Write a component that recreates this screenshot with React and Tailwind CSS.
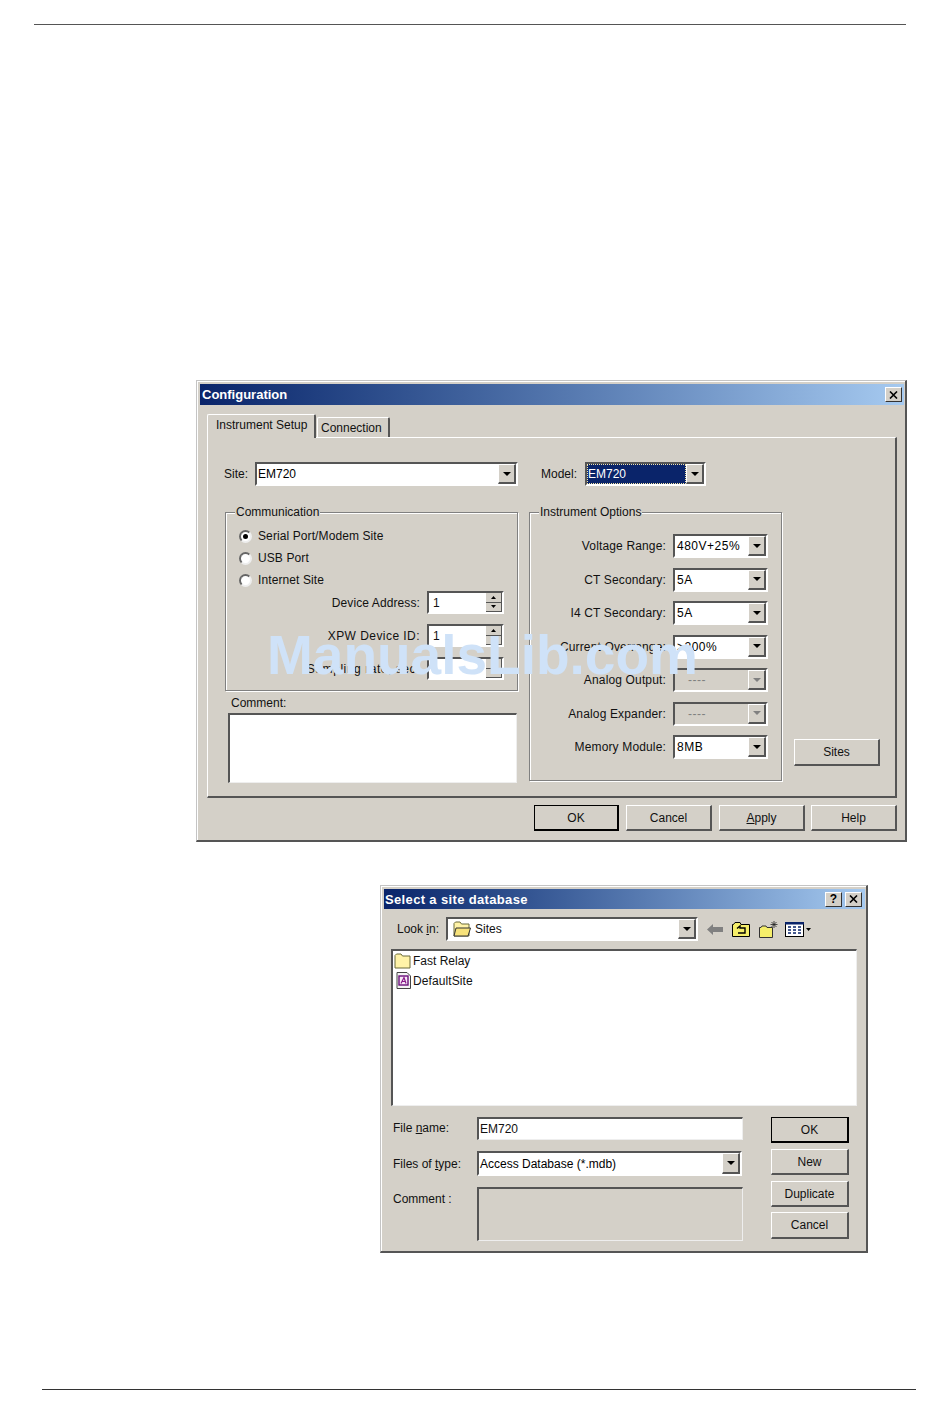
import React from 'react';

// Combo box arrow button
function ArrowButton({ disabled }) {
  return (
    <div className="w-[18px] h-full bg-[#d4d0c8] border-t border-l border-t-white border-l-white border-r-2 border-b-2 border-r-[#555555] border-b-[#555555] flex items-center justify-center">
      <svg width="8" height="4" viewBox="0 0 8 4">
        <path d="M0 0h8L4 4z" fill={disabled ? '#808080' : '#000000'} />
      </svg>
    </div>
  );
}

function Combo({ value, width, height = 24, disabled, selected }) {
  return (
    <div
      className={`flex border-t-2 border-l-2 border-t-[#555555] border-l-[#555555] border-r-2 border-b-2 border-r-white border-b-white shrink-0 ${disabled ? 'bg-[#d4d0c8]' : 'bg-white'}`}
      style={{ width, height }}
    >
      {selected ? (
        <div className="flex-1 bg-[#0a246a] text-white border border-dotted border-[#f5e6a8] flex items-center">{value}</div>
      ) : disabled ? (
        <div className="flex-1 flex items-center pl-[12px] text-[#808080]">{value}</div>
      ) : (
        <div className="flex-1 flex items-center pl-px text-black">{value}</div>
      )}
      <ArrowButton disabled={disabled} />
    </div>
  );
}

function Spinner({ value, up }) {
  return (
    <div className="w-[77px] h-[23px] flex bg-white border-t-2 border-l-2 border-t-[#555555] border-l-[#555555] border-r-2 border-b-2 border-r-white border-b-white shrink-0">
      <div className="flex-1 flex items-center pl-[4px]">{value}</div>
      <div className="w-[16px] flex flex-col">
        <div className="flex-1 bg-[#d4d0c8] border-r border-b border-r-[#555555] border-b-[#555555] flex items-center justify-center">
          {up && (
            <svg width="5" height="3" viewBox="0 0 5 3"><path d="M2.5 0L5 3H0z" fill="#000" /></svg>
          )}
        </div>
        <div className="flex-1 bg-[#d4d0c8] border-r border-b border-r-[#555555] border-b-[#555555] flex items-center justify-center">
          {up && (
            <svg width="5" height="3" viewBox="0 0 5 3"><path d="M0 0h5L2.5 3z" fill="#000" /></svg>
          )}
        </div>
      </div>
    </div>
  );
}

function Radio({ checked, label }) {
  return (
    <div className="flex items-center h-[22px]">
      <div className="w-[13px] h-[13px] rounded-full bg-white border-2 border-t-[#666666] border-l-[#666666] border-r-[#eeeeee] border-b-[#eeeeee] flex items-center justify-center">
        {checked && <div className="w-[5px] h-[5px] rounded-full bg-black" />}
      </div>
      <span className="ml-[6px] tracking-[0.1px]">{label}</span>
    </div>
  );
}

function Button({ children, width, height = 26, isDefault }) {
  return (
    <div
      className={`flex items-center justify-center bg-[#d4d0c8] shrink-0 ${isDefault ? 'border-2 border-t border-l border-black' : 'border-t border-l border-t-white border-l-white border-r-2 border-b-2 border-r-[#555555] border-b-[#555555]'}`}
      style={{ width, height }}
    >
      {children}
    </div>
  );
}

function GroupBox({ title, className, children }) {
  return (
    <div className={`relative border border-[#808080] shadow-[inset_1px_1px_0_#ffffff,1px_1px_0_#ffffff] ${className}`}>
      <span className="absolute left-[9px] top-[-8px] bg-[#d4d0c8] px-px leading-[14px]">{title}</span>
      {children}
    </div>
  );
}

function OptionRow({ label, value, disabled }) {
  return (
    <div className="flex items-center justify-end gap-[7px] h-[24px]">
      <span className="tracking-[0.15px]">{label}</span>
      <Combo value={<span className="ml-px tracking-[0.5px]">{value}</span>} width={95} disabled={disabled} />
    </div>
  );
}

function SpinnerRow({ label, value, up, labelClass }) {
  return (
    <div className="flex items-center justify-end gap-[7px]">
      <span className={labelClass}>{label}</span>
      <Spinner value={value} up={up} />
    </div>
  );
}

function TitleButton({ children }) {
  return (
    <div className="w-[17px] h-[15px] bg-[#d4d0c8] border-t border-l border-t-white border-l-white border-r border-b border-r-[#333333] border-b-[#333333] flex items-center justify-center text-black font-bold text-[12px] leading-none">
      {children}
    </div>
  );
}

function CloseIcon() {
  return (
    <svg width="9" height="8" viewBox="0 0 9 8">
      <path d="M1 0.5L8 7.5M8 0.5L1 7.5" stroke="#000" strokeWidth="1.6" fill="none" />
    </svg>
  );
}

function FolderIcon({ open }) {
  return (
    <svg width="18" height="16" viewBox="0 0 18 16">
      <path d="M1 4V2.5L2.5 1H7L8.5 3H16V15H1z" fill="#fff3a8" stroke="#6b6b3a" strokeWidth="1" />
      {open && <path d="M3 7H17.5L15 15H1z" fill="#f7e27a" stroke="#333" strokeWidth="1" />}
    </svg>
  );
}

function AccessIcon() {
  return (
    <svg width="15" height="17" viewBox="0 0 15 17">
      <path d="M1 .5H11L14.5 4V16.5H1z" fill="#f4f4f4" stroke="#444" />
      <rect x="3" y="4" width="9" height="9" fill="#f6e8f6" stroke="#6a0f7a" strokeWidth="1.4" />
      <path d="M5 11.5L8 5.5L10 11.5M6 9.5H9" stroke="#8a1a8a" strokeWidth="1.2" fill="none" />
    </svg>
  );
}

function Toolbar() {
  return (
    <div className="flex items-center h-[24px] ml-[9px]">
      <svg width="16" height="11" viewBox="0 0 16 11">
        <path d="M0 5.5L6 0V3H16V8H6V11z" fill="#808080" />
      </svg>
      <svg className="ml-[9px]" width="18" height="15" viewBox="0 0 18 15">
        <path d="M.5 14.5V2.5H1.5L3 .5H8L9 2.5H17.5V14.5z" fill="#f5ee6a" stroke="#000" />
        <path d="M5 6.5L8 4V6H13V11H6" stroke="#000" strokeWidth="1.4" fill="none" />
      </svg>
      <svg className="ml-[9px]" width="19" height="17" viewBox="0 0 19 17">
        <path d="M.5 16.5V6.5H2L3 5H7L8 6.5H13.5V16.5z" fill="#f5ee6a" stroke="#333" />
        <path d="M15 0V7M11.5 3.5H18.5M12.5 1L17.5 6M17.5 1L12.5 6" stroke="#222" strokeWidth=".8" />
      </svg>
      <svg className="ml-[7px]" width="27" height="15" viewBox="0 0 27 15">
        <rect x=".5" y=".5" width="18" height="14" fill="#fff" stroke="#000" />
        <rect x="0" y="0" width="19" height="2.5" fill="#0a246a" />
        <path d="M3 5h3M3 8h3M3 11h3M8 5h3M8 8h3M8 11h3M13 5h3M13 8h3M13 11h3" stroke="#0a246a" strokeWidth="1.5" />
        <path d="M21 6h5l-2.5 3z" fill="#000" />
      </svg>
    </div>
  );
}

export default function App() {
  return (
    <div className="relative w-[950px] h-[1420px] bg-white overflow-hidden text-[12px] leading-none text-[#111111] font-['Liberation_Sans',Arial,sans-serif]">
      <div className="h-[24px]" />
      <div className="ml-[34px] w-[872px] h-px bg-[#555555]" />

      {/* Configuration dialog */}
      <div className="mt-[355px] ml-[196px] w-[711px] h-[462px] bg-[#d4d0c8] border-t border-l border-t-[#c4c4c4] border-l-[#c4c4c4] border-r-2 border-b-2 border-r-[#555555] border-b-[#555555]">
        <div className="h-full border-t border-l border-white pt-[2px] pl-[2px] pr-px">
          <div className="h-[21px] flex items-center justify-between pl-[2px] pr-[2px] bg-gradient-to-r from-[#0a246a] to-[#a6caf0] text-white font-bold text-[13px]">
            <span>Configuration</span>
            <TitleButton><CloseIcon /></TitleButton>
          </div>

          {/* Tabs */}
          <div className="ml-[7px] mt-[9px] h-[23px] flex items-end relative z-10">
            <div className="w-[109px] h-[24px] -mb-px bg-[#d4d0c8] border-t border-l border-t-white border-l-white border-r-2 border-r-[#555555] rounded-t-[2px] flex items-center pl-[8px] pb-[4px]">Instrument Setup</div>
            <div className="ml-px w-[73px] h-[20px] border-t border-l border-t-white border-l-white border-r-2 border-r-[#555555] rounded-t-[2px] flex items-center pl-[3px]">Connection</div>
          </div>
          <div className="ml-[7px] w-[690px] h-[361px] border-t border-l border-t-white border-l-white border-r-2 border-b-2 border-r-[#555555] border-b-[#555555] pt-[24px] pl-[16px]">
            <div className="flex items-center h-[24px]">
              <span className="w-[31px]">Site:</span>
              <Combo value="EM720" width={263} />
              <span className="ml-[23px] w-[44px]">Model:</span>
              <Combo value="EM720" width={121} selected />
            </div>

            <div className="flex mt-[26px] ml-px">
              <div className="w-[293px]">
                <GroupBox title="Communication" className="h-[179px] pt-[12px] pl-[13px] pr-[13px]">
                  <Radio checked label="Serial Port/Modem Site" />
                  <Radio label="USB Port" />
                  <Radio label="Internet Site" />
                  <div className="flex flex-col gap-[10px]">
                    <SpinnerRow label="Device Address:" value="1" up labelClass="tracking-[0.1px]" />
                    <SpinnerRow label="XPW Device ID:" value="1" up labelClass="tracking-[0.45px]" />
                    <SpinnerRow label="Sampling rate, sec:" value="" labelClass="tracking-[0.55px]" />
                  </div>
                </GroupBox>
                <div className="mt-[3px] h-[18px] mb-px pl-[6px] flex items-center">Comment:</div>
                <div className="ml-[3px] w-[289px] h-[70px] bg-white border-t-2 border-l-2 border-t-[#555555] border-l-[#555555] border-r border-b border-r-[#eeeeee] border-b-[#eeeeee]" />
              </div>

              <GroupBox title="Instrument Options" className="ml-[11px] w-[253px] h-[269px] pt-[21px] pr-[13px]">
                <div className="flex flex-col gap-[9.5px]">
                  <OptionRow label="Voltage Range:" value="480V+25%" />
                  <OptionRow label="CT Secondary:" value="5A" />
                  <OptionRow label="I4 CT Secondary:" value="5A" />
                  <OptionRow label="Current Overrange:" value=">200%" />
                  <OptionRow label="Analog Output:" value="----" disabled />
                  <OptionRow label="Analog Expander:" value="----" disabled />
                  <OptionRow label="Memory Module:" value="8MB" />
                </div>
              </GroupBox>

              <div className="ml-[12px] mt-[227px]">
                <Button width={86} height={27}>Sites</Button>
              </div>
            </div>
          </div>

          <div className="ml-[7px] w-[690px] mt-[7px] flex justify-end">
            <Button width={85} isDefault>OK</Button>
            <div className="ml-[7px]"><Button width={86}>Cancel</Button></div>
            <div className="ml-[7px]"><Button width={86}><span><u>A</u>pply</span></Button></div>
            <div className="ml-[6px]"><Button width={86}>Help</Button></div>
          </div>
        </div>
      </div>

      {/* Site database dialog */}
      <div className="mt-[43px] ml-[380px] w-[488px] h-[368px] bg-[#d4d0c8] border-t border-l border-t-[#c4c4c4] border-l-[#c4c4c4] border-r-2 border-b-2 border-r-[#555555] border-b-[#555555]">
        <div className="h-full border-t border-l border-white pt-[2px] pl-[2px] pr-px">
          <div className="h-[20px] flex items-center justify-between pl-px pr-[3px] bg-gradient-to-r from-[#0a246a] to-[#a6caf0] text-white font-bold text-[13px] tracking-[0.35px]">
            <span>Select a site database</span>
            <div className="flex gap-[3px]">
              <TitleButton>?</TitleButton>
              <TitleButton><CloseIcon /></TitleButton>
            </div>
          </div>

          <div className="flex items-center mt-[8px] ml-[13px] h-[24px]">
            <span className="w-[49px]">Look <u>i</u>n:</span>
            <div className="flex w-[252px] h-[24px] bg-white border-t-2 border-l-2 border-t-[#555555] border-l-[#555555] border-r-2 border-b-2 border-r-white border-b-white">
              <div className="flex-1 flex items-center gap-[4px] pl-[5px]">
                <FolderIcon open />
                <span>Sites</span>
              </div>
              <ArrowButton />
            </div>
            <Toolbar />
          </div>

          <div className="mt-[8px] ml-[7px] w-[466px] h-[157px] bg-white border-t-2 border-l-2 border-t-[#555555] border-l-[#555555] border-r border-b border-r-[#eeeeee] border-b-[#eeeeee] pl-px">
            <div className="flex items-center h-[19px] gap-[1px]">
              <FolderIcon />
              <span>Fast Relay</span>
            </div>
            <div className="flex items-center h-[19px] gap-[2px] pl-[2px] mt-px">
              <AccessIcon />
              <span className="tracking-[0.1px]">DefaultSite</span>
            </div>
          </div>

          <div className="flex mt-[11px] ml-[9px]">
            <div className="grid grid-cols-[84px_266px] grid-rows-[23px_25px_54px] gap-y-[11px]">
              <span className="self-center -mt-[2px]">File <u>n</u>ame:</span>
              <div className="bg-white border-t-2 border-l-2 border-t-[#555555] border-l-[#555555] border-r border-b border-r-[#eeeeee] border-b-[#eeeeee] flex items-center pl-px">EM720</div>
              <span className="self-center">Files of <u>t</u>ype:</span>
              <Combo value="Access Database (*.mdb)" width={265} height={25} />
              <span className="pt-[6px]">Comment :</span>
              <div className="border-t-2 border-l-2 border-t-[#555555] border-l-[#555555] border-r border-b border-r-[#eeeeee] border-b-[#eeeeee]" />
            </div>
            <div className="ml-[28px] flex flex-col">
              <Button width={78} isDefault>OK</Button>
              <div className="mt-[6px]"><Button width={78}>New</Button></div>
              <div className="mt-[6px]"><Button width={78}>Duplicate</Button></div>
              <div className="mt-[5px]"><Button width={78} height={27}>Cancel</Button></div>
            </div>
          </div>
        </div>
      </div>

      <div className="mt-[136px] ml-[42px] w-[874px] h-px bg-[#333333]" />

      {/* Watermark over the page */}
      <div className="absolute left-[267px] top-[622px] text-[55px] leading-[66px] font-bold text-[#cfe2f8] whitespace-nowrap">
        ManualsLib.com
      </div>
    </div>
  );
}
